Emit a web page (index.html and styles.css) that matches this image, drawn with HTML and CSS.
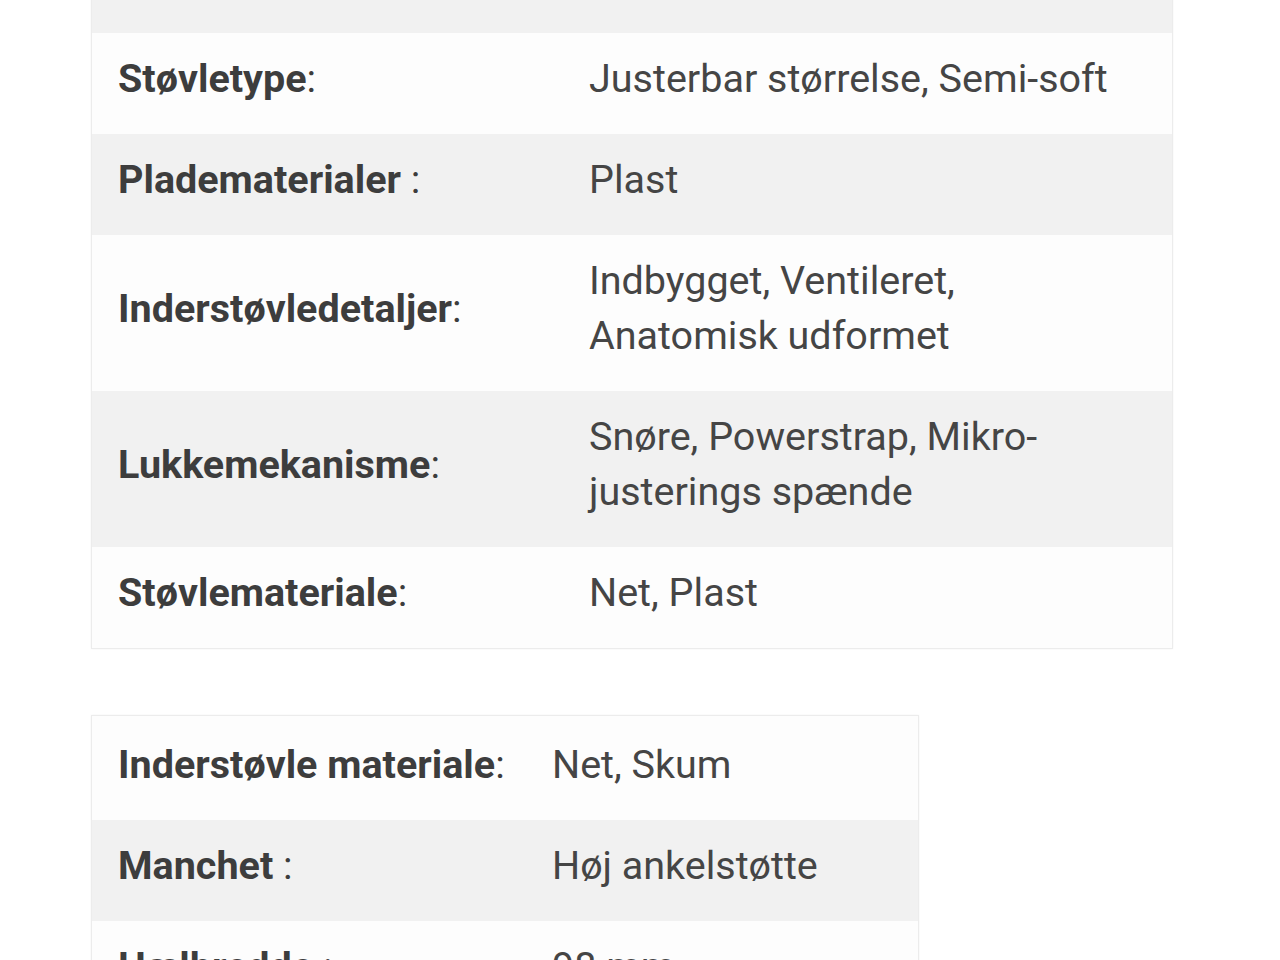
FILE: index.html
```html
<!DOCTYPE html>
<html lang="da">
<head>
<meta charset="utf-8">
<title>Specifikationer</title>
<link rel="stylesheet" href="styles.css">
</head>
<body>
<main class="page">
  <table class="spec spec-wide">
    <tbody>
      <tr class="row-alt row-top"><td class="label"></td><td class="value"></td></tr>
      <tr><td class="label"><b>Støvletype</b>:</td><td class="value">Justerbar størrelse, Semi-soft</td></tr>
      <tr class="row-alt"><td class="label"><b>Pladematerialer</b> :</td><td class="value">Plast</td></tr>
      <tr><td class="label"><b>Inderstøvledetaljer</b>:</td><td class="value">Indbygget, Ventileret, Anatomisk udformet</td></tr>
      <tr class="row-alt"><td class="label"><b>Lukkemekanisme</b>:</td><td class="value">Snøre, Powerstrap, Mikro-justerings spænde</td></tr>
      <tr><td class="label"><b>Støvlemateriale</b>:</td><td class="value">Net, Plast</td></tr>
    </tbody>
  </table>

  <table class="spec spec-narrow">
    <tbody>
      <tr class="row-first"><td class="label"><b>Inderstøvle materiale</b>:</td><td class="value">Net, Skum</td></tr>
      <tr class="row-alt"><td class="label"><b>Manchet</b> :</td><td class="value">Høj ankelstøtte</td></tr>
      <tr><td class="label"><b>Hælbredde</b> :</td><td class="value">98 mm</td></tr>
    </tbody>
  </table>
</main>
</body>
</html>
```

FILE: styles.css
```css
html, body {
  margin: 0;
  padding: 0;
  background: #ffffff;
}

body {
  font-family: Roboto, "Noto Sans", "Liberation Sans", sans-serif;
  color: #444444;
  overflow: hidden;
}

.page {
  display: flex;
  flex-direction: column;
  align-items: flex-start;
  padding-left: 91px;
}

.spec {
  border-collapse: separate;
  border-spacing: 0;
  border: 1px solid #ececec;
  box-shadow: 0 0 2px rgba(0, 0, 0, 0.05);
  background: #fdfdfd;
  font-size: 39.5px;
  line-height: 55px;
}

.spec-wide {
  width: 1082px;
  margin-top: -69px;
}

.spec-narrow {
  width: 828px;
  margin-top: 66px;
}

.spec td {
  padding: 18px 45px 28px 26px;
  vertical-align: middle;
  text-align: left;
  box-sizing: border-box;
}

.spec-wide .label {
  width: 471px;
}

.spec-narrow .label {
  width: 434px;
  padding-right: 16px;
  white-space: nowrap;
}

.label {
  color: #3d3d3d;
  font-weight: 400;
}

.label b {
  font-weight: 700;
}

.value {
  color: #454545;
  font-weight: 400;
}

.row-alt td {
  background: #f1f1f1;
}

.row-top td {
  height: 101px;
}

.row-first td {
  padding-top: 21px;
}
```
